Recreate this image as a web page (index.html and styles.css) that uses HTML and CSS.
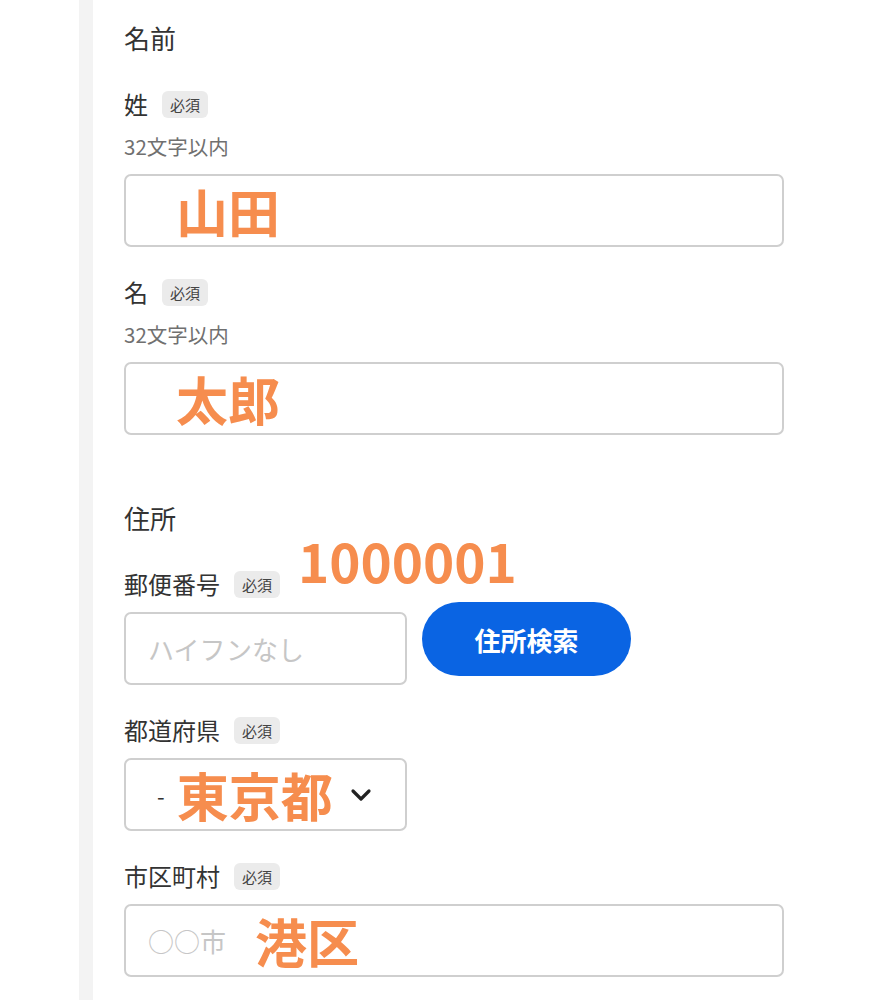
FILE: index.html
```html
<!DOCTYPE html>
<html lang="ja">
<head>
<meta charset="utf-8">
<title>フォーム</title>
<link rel="stylesheet" href="styles.css">
</head>
<body>
<div class="page">
  <main class="form">
    <section class="section">
      <h2 class="section-title">名前</h2>
      <div class="field">
        <div class="label-row"><span class="label">姓</span><span class="badge">必須</span></div>
        <p class="hint">32文字以内</p>
        <div class="input wide"><span class="value">山田</span></div>
      </div>
      <div class="field">
        <div class="label-row"><span class="label">名</span><span class="badge">必須</span></div>
        <p class="hint">32文字以内</p>
        <div class="input wide"><span class="value">太郎</span></div>
      </div>
    </section>
    <section class="section">
      <h2 class="section-title">住所</h2>
      <div class="field">
        <div class="label-row"><span class="label">郵便番号</span><span class="badge">必須</span><span class="note">1000001</span></div>
        <div class="zip-row">
          <div class="input narrow"><span class="placeholder">ハイフンなし</span></div>
          <button class="search-btn" type="button">住所検索</button>
        </div>
      </div>
      <div class="field">
        <div class="label-row"><span class="label">都道府県</span><span class="badge">必須</span></div>
        <div class="input narrow select">
          <span class="dash">-</span>
          <span class="value-inline">東京都</span>
          <svg class="chevron" width="22" height="14" viewBox="0 0 22 14"><path d="M3 3 L11 11 L19 3" fill="none" stroke="#222" stroke-width="3.2" stroke-linecap="round" stroke-linejoin="round"/></svg>
        </div>
      </div>
      <div class="field">
        <div class="label-row"><span class="label">市区町村</span><span class="badge">必須</span></div>
        <div class="input wide city">
          <span class="placeholder">○○市</span>
          <span class="value-inline">港区</span>
        </div>
      </div>
    </section>
  </main>
</div>
</body>
</html>
```
FILE: styles.css
```css
* { box-sizing: border-box; }
html, body {
  margin: 0;
  padding: 0;
  background: #fff;
}
body {
  font-family: "Noto Sans CJK JP", "Noto Sans", sans-serif;
  color: #333;
}
.page {
  padding-left: 79px;
  min-height: 1000px;
}
.form {
  border-left: 14px solid #f3f3f3;
  padding: 22px 0 40px 31px;
  min-height: 1000px;
}
.section + .section {
  margin-top: 67px;
}
.section-title {
  margin: 0 0 34px;
  font-size: 26px;
  line-height: 32px;
  font-weight: 400;
  color: #333;
}
.field + .field {
  margin-top: 29px;
}
.label-row {
  position: relative;
  display: flex;
  align-items: center;
  height: 32px;
  margin-bottom: 12px;
}
.label {
  font-size: 24px;
  line-height: 32px;
  color: #333;
}
.badge {
  margin-left: 14px;
  height: 27px;
  padding: 0 8px;
  border-radius: 6px;
  background: #ebebeb;
  color: #444;
  font-size: 15px;
  line-height: 27px;
}
.note {
  position: absolute;
  left: 174px;
  top: -34px;
  font-size: 53px;
  line-height: 1;
  font-weight: 700;
  color: #f68d4e;
}
.hint {
  margin: 1px 0 14px;
  font-size: 20.5px;
  line-height: 28px;
  color: #707070;
}
.input {
  display: flex;
  align-items: center;
  height: 73px;
  border: 2px solid #cfcfcf;
  border-radius: 7px;
  background: #fff;
}
.input.wide {
  width: 660px;
}
.input.narrow {
  width: 283px;
}
.value {
  padding-left: 50px;
  font-size: 52px;
  line-height: 1;
  font-weight: 700;
  color: #f68d4e;
}
.placeholder {
  padding-left: 22px;
  font-size: 26px;
  color: #c6c6c6;
}
.zip-row {
  display: flex;
  align-items: flex-start;
  gap: 15px;
}
.search-btn {
  margin-top: -10px;
  width: 209px;
  height: 74px;
  border: none;
  border-radius: 37px;
  background: #0a64e3;
  color: #fff;
  font-family: inherit;
  font-size: 26px;
  font-weight: 700;
}
.select {
  padding-left: 31px;
}
.dash {
  font-size: 22px;
  color: #333;
}
.value-inline {
  font-size: 52px;
  line-height: 1;
  font-weight: 700;
  color: #f68d4e;
}
.select .value-inline {
  margin-left: 12px;
}
.chevron {
  margin-left: 17px;
}
.city .value-inline {
  margin-left: 29px;
}
```
